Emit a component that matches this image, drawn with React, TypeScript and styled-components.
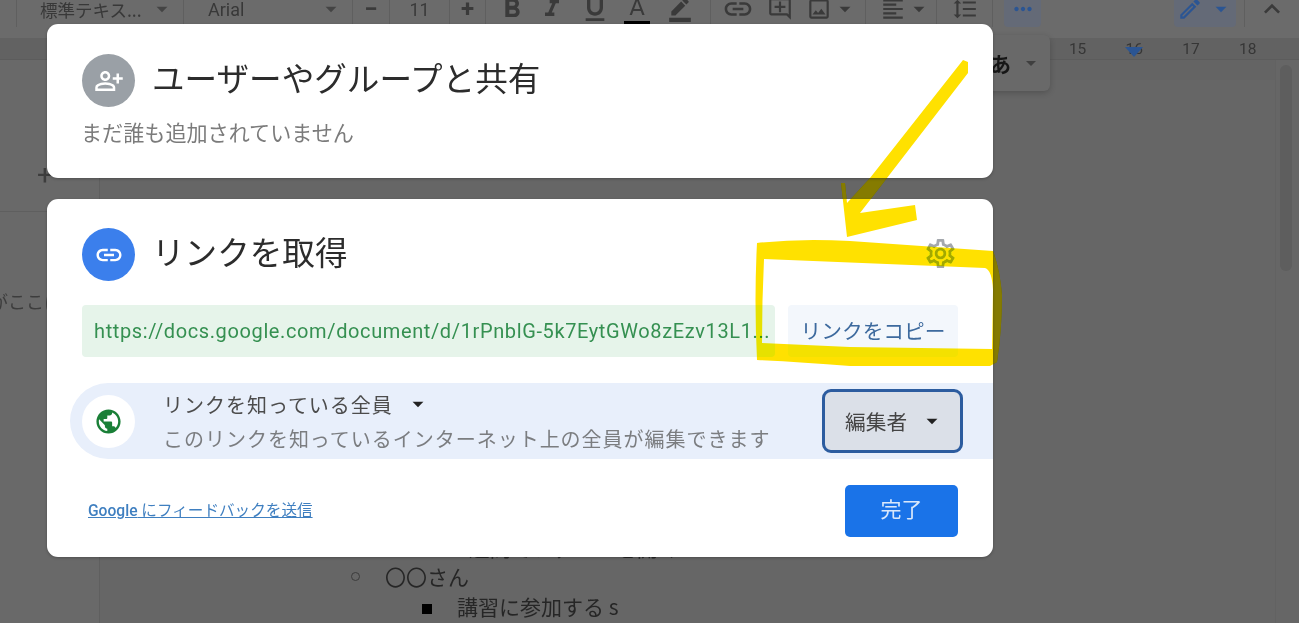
import React from 'react'
import styled, { createGlobalStyle } from 'styled-components'
import {
  MdArrowDropDown,
  MdBorderColor,
  MdFormatAlignLeft,
  MdFormatBold,
  MdFormatItalic,
  MdFormatLineSpacing,
  MdFormatUnderlined,
  MdKeyboardArrowUp,
  MdLink,
  MdMoreHoriz,
  MdOutlineAddComment,
  MdOutlineEdit,
  MdOutlineImage,
  MdOutlinePersonAddAlt,
  MdOutlineSettings,
  MdPublic,
} from 'react-icons/md'

const jp = `"Noto Sans CJK JP", "Noto Sans", sans-serif`
const latin = `Roboto, "Noto Sans CJK JP", sans-serif`

const GlobalStyle = createGlobalStyle`
  html, body {
    margin: 0;
    padding: 0;
    background: #666;
    overflow: hidden;
  }
`

const Page = styled.div`
  position: relative;
  width: 1299px;
  height: 623px;
  overflow: hidden;
  display: grid;
  grid-template-rows: 38px 22px 1fr;
  background: #666;
  font-family: ${jp};
`

const Toolbar = styled.div`
  display: flex;
  align-items: center;
  height: 38px;
  box-sizing: border-box;
  padding: 0 0 20px 16px;
  background: #6b6b6b;
  color: #3a3a3a;
  overflow: hidden;
`

const Sep = styled.span<{ $ml?: number }>`
  flex: none;
  width: 1px;
  height: 36px;
  margin-left: ${p => p.$ml ?? 0}px;
  background: #5f5f5f;
`

const Slot = styled.div<{ $w: number; $pl?: number; $ml?: number; $active?: boolean; $blue?: boolean; $big?: boolean }>`
  flex: none;
  display: flex;
  align-items: center;
  justify-content: center;
  box-sizing: border-box;
  width: ${p => p.$w}px;
  height: 36px;
  padding-left: ${p => p.$pl ?? 0}px;
  margin-left: ${p => p.$ml ?? 0}px;
  gap: ${p => (p.$blue ? 5 : 0)}px;
  border-radius: 4px;
  background: ${p => (p.$active ? '#646a77' : 'transparent')};
  color: ${p => (p.$blue ? '#2b5593' : 'inherit')};
  font-size: ${p => (p.$big ? 32 : 26)}px;
`

const Select = styled.div<{ $w: number; $pl: number }>`
  flex: none;
  display: flex;
  align-items: center;
  justify-content: space-between;
  box-sizing: border-box;
  width: ${p => p.$w}px;
  padding: 0 8px 0 ${p => p.$pl}px;
  font-size: 17.5px;
  color: #383838;
  white-space: nowrap;

  svg {
    font-size: 26px;
    color: #444;
  }
`

const SizeText = styled.span`
  font-family: Roboto, sans-serif;
  font-size: 18px;
`

const StepText = styled.span`
  font-family: Roboto, sans-serif;
  font-size: 24px;
  font-weight: 700;
`

const ColorA = styled.span`
  display: block;
  font-family: Roboto, sans-serif;
  font-size: 24px;
  line-height: 27px;
  border-bottom: 3px solid #000;
  width: 36px;
  text-align: center;
`

const Ruler = styled.div`
  display: flex;
  justify-content: flex-end;
  align-items: center;
  padding-right: 23px;
  background: #626262;
  border-bottom: 1px solid #5c5c5c;
  box-sizing: border-box;
`

const RulerNum = styled.span`
  width: 56.7px;
  text-align: center;
  font-family: Roboto, sans-serif;
  font-size: 15.5px;
  color: #363636;
`

const IndentMark = styled.span`
  position: absolute;
  left: 1125px;
  top: 47px;
  width: 0;
  height: 0;
  border-left: 9px solid transparent;
  border-right: 9px solid transparent;
  border-top: 10px solid #2b5593;
`

const Body = styled.div`
  display: flex;
  min-height: 0;
`

const SidePanel = styled.div`
  flex: none;
  width: 100px;
  box-sizing: border-box;
  border-right: 1px solid #5f5f5f;
  background: #696969;
  color: #3d3d3d;
  overflow: hidden;
`

const AddTab = styled.div`
  font-family: Roboto, sans-serif;
  font-size: 28px;
  line-height: 28px;
  padding: 101px 0 22px 37px;
  font-weight: 400;
  border-bottom: 1px solid #5f5f5f;
`

const OutlineHint = styled.div`
  margin: 76px 0 0 -64px;
  font-size: 18px;
  line-height: 26px;
  white-space: nowrap;
`

const DocColumn = styled.div`
  flex: 1;
  display: flex;
  flex-direction: column;
  justify-content: flex-end;
  padding-bottom: 2px;
  box-shadow: inset 0 20px 0 #646464;
`

const DocRow = styled.div<{ $indent: number; $tight?: boolean }>`
  display: flex;
  align-items: center;
  height: 30px;
  margin-bottom: ${p => (p.$tight ? -1 : 0)}px;
  padding-left: ${p => p.$indent}px;
  font-size: 21px;
  color: #262626;
  white-space: nowrap;
`

const Bullet = styled.span<{ $filled?: boolean }>`
  flex: none;
  box-sizing: border-box;
  width: ${p => (p.$filled ? 10 : 9)}px;
  height: ${p => (p.$filled ? 10 : 9)}px;
  margin: ${p => (p.$filled ? 6 : 0)}px 25px 0 0;
  background: ${p => (p.$filled ? '#000' : 'transparent')};
  border: ${p => (p.$filled ? 'none' : '1.5px solid #3c3c3c')};
  border-radius: ${p => (p.$filled ? 0 : '50%')};
`

const ScrollRail = styled.div`
  flex: none;
  width: 24px;
  box-sizing: border-box;
  padding: 5px 7px 0 4px;
  border-left: 1px solid #626262;
`

const ScrollThumb = styled.div`
  height: 206px;
  border-radius: 7px;
  background: #5e5e5e;
`

const InputTool = styled.div`
  position: absolute;
  top: 35px;
  left: 960px;
  width: 90px;
  height: 56px;
  box-sizing: border-box;
  display: flex;
  align-items: center;
  justify-content: flex-end;
  gap: 8px;
  padding-right: 7px;
  background: #696969;
  border-radius: 6px;
  box-shadow: 0 2px 6px rgba(0, 0, 0, 0.2);
  font-size: 21px;
  font-weight: 700;
  color: #161616;

  svg {
    font-size: 24px;
    color: #3f3f3f;
  }
`

const ScribbleSvg = styled.svg<{ $blend?: boolean }>`
  position: absolute;
  left: 0;
  top: 0;
  pointer-events: none;
  mix-blend-mode: ${p => (p.$blend ? 'darken' : 'normal')};
`

const DialogStack = styled.div`
  position: absolute;
  left: 47px;
  top: 24px;
  width: 946px;
  display: flex;
  flex-direction: column;
  gap: 21px;
`

const Card = styled.section<{ $h: number }>`
  box-sizing: border-box;
  height: ${p => p.$h}px;
  background: #fff;
  border-radius: 11px;
  overflow: hidden;
  box-shadow: 0 1px 3px rgba(0, 0, 0, 0.25);
`

const CardHead = styled.header<{ $pt: number }>`
  display: flex;
  align-items: center;
  gap: 17px;
  padding: ${p => p.$pt}px 35px 0;
`

const Avatar = styled.div<{ $bg: string }>`
  flex: none;
  width: 53px;
  height: 53px;
  border-radius: 50%;
  display: flex;
  align-items: center;
  justify-content: center;
  background: ${p => p.$bg};
  color: #fff;
  font-size: 30px;
`

const Title = styled.h2`
  flex: 1;
  margin: 0;
  padding-bottom: 8px;
  font-size: 32.6px;
  line-height: 44px;
  font-weight: 400;
  color: #2c2c2c;
  white-space: nowrap;
`

const GearWrap = styled.div`
  display: flex;
  margin: 0 0 3px 0;
  font-size: 35px;
  color: #a4a8ad;
`

const Muted = styled.p`
  margin: 10px 0 0 34px;
  font-size: 21.1px;
  line-height: 30px;
  color: #7b7b7b;
`

const LinkRow = styled.div`
  display: flex;
  gap: 13px;
  margin: 24px 35px 0;
  height: 52px;
`

const UrlBox = styled.div`
  box-sizing: border-box;
  width: 693px;
  display: flex;
  align-items: center;
  padding-left: 12px;
  border-radius: 4px;
  background: #e6f4ea;
  color: #359051;
  font-family: ${latin};
  font-size: 20px;
  letter-spacing: 0.62px;
  white-space: nowrap;
  overflow: hidden;
`

const CopyButton = styled.button`
  width: 170px;
  border: 0;
  padding: 0 0 2px;
  border-radius: 4px;
  background: #f3f7fc;
  color: #3d6a9e;
  font-family: ${jp};
  font-size: 20.7px;
`

const AccessRow = styled.div`
  display: flex;
  align-items: center;
  height: 76px;
  margin: 26px 0 0 23px;
  padding: 0 30px 0 12px;
  background: #e8effb;
  border-radius: 38px 0 0 38px;
`

const GlobeBadge = styled.div`
  flex: none;
  width: 53px;
  height: 53px;
  border-radius: 50%;
  display: flex;
  align-items: center;
  justify-content: center;
  background: #fff;
  color: #1a7f37;
  font-size: 29px;
`

const AccessText = styled.div`
  flex: 1;
  margin-left: 28px;
  font-size: 20px;
  letter-spacing: 0.98px;
  white-space: nowrap;
`

const AccessName = styled.div`
  display: flex;
  align-items: center;
  height: 33px;
  color: #4c4c4c;

  svg {
    margin-left: 12px;
    font-size: 26px;
    color: #222;
  }
`

const AccessNote = styled.div`
  height: 34px;
  line-height: 36px;
  color: #7b7d80;
`

const RoleButton = styled.button`
  flex: none;
  display: flex;
  align-items: center;
  justify-content: space-between;
  box-sizing: border-box;
  width: 141px;
  height: 64px;
  padding: 0 15px 0 20px;
  border: 3px solid #2c5c9f;
  border-radius: 9px;
  background: #dbe0e8;
  color: #444;
  font-family: ${jp};
  font-size: 20.7px;

  svg {
    font-size: 26px;
    color: #222;
  }
`

const CardFoot = styled.footer`
  display: flex;
  align-items: center;
  justify-content: space-between;
  margin-top: 26px;
  padding: 0 35px 0 41px;
`

const FeedbackLink = styled.a`
  margin-bottom: 4px;
  font-family: ${latin};
  font-size: 15.6px;
  color: #3f7fc0;
  text-decoration: underline;

  b {
    font-weight: 500;
  }
`

const DoneButton = styled.button`
  width: 113px;
  height: 52px;
  border: 0;
  padding: 0 0 6px;
  border-radius: 5px;
  background: #1a73e8;
  color: #d9e8fb;
  font-family: ${jp};
  font-size: 21px;
`

const arrow =
  'M963 60 L968 62 L968 73 L887 178 L860 213 L915 205 L917 220 L847 237 L841 183 L845 183 L847 203 L870 178 Z'
const box =
  'M757 243 Q800 238 850 241 L993 251 Q1000 270 1002 295 Q1002 330 997 362 L990 366 L850 366 Q800 362 757 360 Q754 300 757 243 Z ' +
  'M764 259 L985 268 Q992 270 993 290 L992 349 L850 347 L762 343 Q762 300 764 259 Z'

function Scribble({ color, blend }: { color: string; blend?: boolean }) {
  return (
    <ScribbleSvg $blend={blend} width="1299" height="623" viewBox="0 0 1299 623">
      <path d={arrow} fill={color} />
      <path d={box} fill={color} fillRule="evenodd" />
    </ScribbleSvg>
  )
}

function App() {
  return (
    <Page>
      <GlobalStyle />
      <Toolbar>
        <Sep />
        <Select $w={166} $pl={23}>
          標準テキス... <MdArrowDropDown />
        </Select>
        <Sep />
        <Select $w={168} $pl={24}>
          <SizeText>Arial</SizeText> <MdArrowDropDown />
        </Select>
        <Sep />
        <Slot $w={36}><StepText>−</StepText></Slot>
        <Sep />
        <Slot $w={59}><SizeText>11</SizeText></Slot>
        <Sep />
        <Slot $w={35}><StepText>+</StepText></Slot>
        <Sep />
        <Slot $w={52} $big><MdFormatBold /></Slot>
        <Slot $w={28} $big><MdFormatItalic /></Slot>
        <Slot $w={58} $big><MdFormatUnderlined /></Slot>
        <Slot $w={26}><ColorA>A</ColorA></Slot>
        <Slot $w={60}><MdBorderColor /></Slot>
        <Sep />
        <Slot $w={54} $big><MdLink /></Slot>
        <Slot $w={30}><MdOutlineAddComment /></Slot>
        <Slot $w={70} $pl={4}><MdOutlineImage /><MdArrowDropDown /></Slot>
        <Sep />
        <Slot $w={70} $pl={10}><MdFormatAlignLeft /><MdArrowDropDown /></Slot>
        <Sep />
        <Slot $w={55}><MdFormatLineSpacing /></Slot>
        <Sep />
        <Slot $w={37} $ml={11} $active $blue><MdMoreHoriz /></Slot>
        <Slot $w={62} $ml={133} $active $blue><MdOutlineEdit /><MdArrowDropDown /></Slot>
        <Sep $ml={8} />
        <Slot $w={54} $big><MdKeyboardArrowUp /></Slot>
      </Toolbar>
      <Ruler>
        <RulerNum>15</RulerNum>
        <RulerNum>16</RulerNum>
        <RulerNum>17</RulerNum>
        <RulerNum>18</RulerNum>
      </Ruler>
      <Body>
        <SidePanel>
          <AddTab>+</AddTab>
          <OutlineHint>見出しがここに表示されます</OutlineHint>
        </SidePanel>
        <DocColumn>
          <DocRow $indent={322} $tight><Bullet $filled />1週間でファイルを開く</DocRow>
          <DocRow $indent={251}><Bullet />〇〇さん</DocRow>
          <DocRow $indent={322}><Bullet $filled />講習に参加する s</DocRow>
        </DocColumn>
        <ScrollRail><ScrollThumb /></ScrollRail>
      </Body>
      <IndentMark />
      <InputTool>あ<MdArrowDropDown /></InputTool>
      <Scribble color="#857b00" />
      <DialogStack>
        <Card $h={154}>
          <CardHead $pt={30}>
            <Avatar $bg="#9aa0a6"><MdOutlinePersonAddAlt /></Avatar>
            <Title>ユーザーやグループと共有</Title>
          </CardHead>
          <Muted>まだ誰も追加されていません</Muted>
        </Card>
        <Card $h={358}>
          <CardHead $pt={29}>
            <Avatar $bg="#3b7fec"><MdLink /></Avatar>
            <Title>リンクを取得</Title>
            <GearWrap><MdOutlineSettings /></GearWrap>
          </CardHead>
          <LinkRow>
            <UrlBox>https://docs.google.com/document/d/1rPnblG-5k7EytGWo8zEzv13L1...</UrlBox>
            <CopyButton>リンクをコピー</CopyButton>
          </LinkRow>
          <AccessRow>
            <GlobeBadge><MdPublic /></GlobeBadge>
            <AccessText>
              <AccessName>リンクを知っている全員<MdArrowDropDown /></AccessName>
              <AccessNote>このリンクを知っているインターネット上の全員が編集できます</AccessNote>
            </AccessText>
            <RoleButton>編集者<MdArrowDropDown /></RoleButton>
          </AccessRow>
          <CardFoot>
            <FeedbackLink><b>Google</b> にフィードバックを送信</FeedbackLink>
            <DoneButton>完了</DoneButton>
          </CardFoot>
        </Card>
      </DialogStack>
      <Scribble color="#ffe100" blend />
    </Page>
  )
}

export default App
